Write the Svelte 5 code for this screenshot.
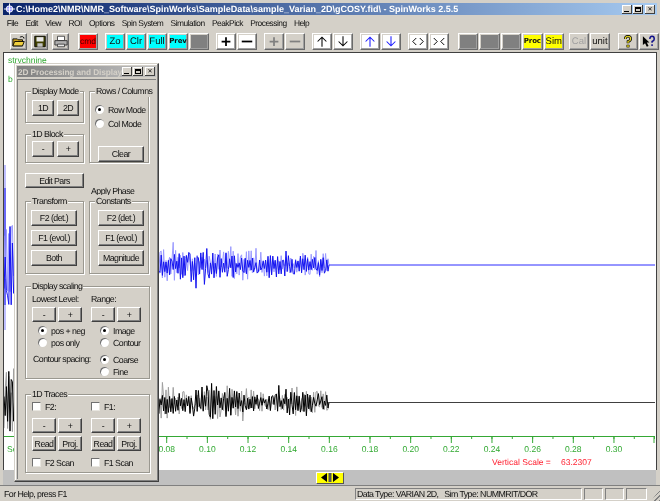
<script>
	const menus = ['File', 'Edit', 'View', 'ROI', 'Options', 'Spin System', 'Simulation', 'PeakPick', 'Processing', 'Help'];

	const toolbar = [
		[{ icon: 'open', w: 17 }, { icon: 'save', w: 17 }, { icon: 'print', w: 17 }],
		[{ t: 'cmd', c: 'red' }],
		[{ t: 'Zo', c: 'cyan' }, { t: 'Clr', c: 'cyan' }, { t: 'Full', c: 'cyan' }, { t: 'Prev', c: 'cyan small' }, { c: 'dim' }],
		[{ icon: 'plus', c: 'white' }, { icon: 'minus', c: 'white' }],
		[{ icon: 'plus', off: true }, { icon: 'minus', off: true }],
		[{ icon: 'up', c: 'white' }, { icon: 'down', c: 'white' }],
		[{ icon: 'up', c: 'white', blue: true }, { icon: 'down', c: 'white', blue: true }],
		[{ icon: 'apart', c: 'white' }, { icon: 'together', c: 'white' }],
		[{ c: 'dim' }, { c: 'dim' }, { c: 'dim' }, { t: 'Proc', c: 'yellow small' }, { t: 'Sim', c: 'yellow' }],
		[{ t: 'Cal', c: 'off' }, { t: 'unit' }],
		[{ icon: 'help' }, { icon: 'whatsthis' }]
	];

	// same little generator each run so the traces stay put
	function rng(seed) {
		let s = seed;
		return () => {
			s = (s * 1664525 + 1013904223) % 4294967296;
			return s / 4294967296;
		};
	}

	function trace(seed, base, left) {
		const r = rng(seed);
		const pts = [];
		let sign = 1;
		for (let x = 4; x <= 329; x += 1.2) {
			const slow = 0.8 + 0.2 * Math.sin(x / 13 + seed);
			let amp = x < 14 ? left : (20 - ((x - 150) / 180) * 8) * slow;
			if (r() > 0.9) amp *= 1.35;
			sign = r() > 0.15 ? -sign : sign;
			const y = base + sign * amp * (0.1 + 0.9 * r());
			pts.push(`${x.toFixed(1)},${y.toFixed(1)}`);
		}
		pts.push(`329,${base}`);
		return pts.join(' ');
	}

	const majors = [0.08, 0.1, 0.12, 0.14, 0.16, 0.18, 0.2, 0.22, 0.24, 0.26, 0.28, 0.3];
	const tickX = (v) => 166.7 + (v - 0.08) * 2033;
	const minors = Array.from({ length: 25 }, (_, i) => 0.01 * i + 0.08);
</script>

{#snippet icon(name, off, blue)}
	{@const ink = off ? '#808080' : blue ? '#1a1aff' : '#000'}
	<svg class="ico" width="14" height="13" viewBox="0 0 16 14">
		{#if name === 'open'}
			<path d="M1 4h5l1 1h5v7H1z" fill="#c8a020" stroke="#000" />
			<path d="M3 7h11l-2 5H1z" fill="#f0d040" stroke="#000" />
			<path d="M9 2q3-2 5 1l-1 0" fill="none" stroke="#000" />
		{:else if name === 'save'}
			<path d="M2 1h12v12H2z" fill="#404000" stroke="#000" />
			<path d="M4 2h8v5H4z" fill="#e8e8e8" />
			<path d="M5 9h6v4H5z" fill="#c0c0c0" />
		{:else if name === 'print'}
			<path d="M4 1h8v5H4z" fill="#fff" stroke="#404040" />
			<path d="M1 6h14v5H1z" fill="#b0b0b0" stroke="#303030" />
			<path d="M4 10h8v3H4z" fill="#e8e8e8" stroke="#404040" />
		{:else if name === 'plus'}
			<path d="M8 2v10M3 7h10" stroke={ink} stroke-width="2" />
		{:else if name === 'minus'}
			<path d="M2 7h12" stroke={ink} stroke-width="2" />
		{:else if name === 'up'}
			<path d="M8 13V2M3 7l5-5 5 5" fill="none" stroke={ink} stroke-width="1.2" />
		{:else if name === 'down'}
			<path d="M8 1v11M3 7l5 5 5-5" fill="none" stroke={ink} stroke-width="1.2" />
		{:else if name === 'apart'}
			<path d="M6 3L2 7l4 4M10 3l4 4-4 4" fill="none" stroke={ink} stroke-width="1.1" />
		{:else if name === 'together'}
			<path d="M2 3l4 4-4 4M14 3l-4 4 4 4" fill="none" stroke={ink} stroke-width="1.1" />
		{:else if name === 'help'}
			<path d="M5 4q0-3 3-3t3 3q0 2-3 3v2" fill="none" stroke="#000" stroke-width="3" />
			<path d="M5 4q0-3 3-3t3 3q0 2-3 3v2" fill="none" stroke="#e8d820" stroke-width="1.4" />
			<path d="M6.500 11h3v2.500h-3z" fill="#e8d820" stroke="#000" stroke-width="0.6" />
		{:else if name === 'whatsthis'}
			<path d="M1 1v10l2.500-2 2 4 2-1-2-4h3z" fill="#000" />
			<path d="M9 4q0-3 2.500-3T14 4q0 2-2.500 3v1.500M11.500 10v2" fill="none" stroke="#10108a" stroke-width="1.700" />
		{/if}
	</svg>
{/snippet}

{#snippet radio(label, on)}
	<span class="opt"><span class="radio" class:on></span>{label}</span>
{/snippet}

{#snippet check(label)}
	<span class="opt"><span class="box"></span>{label}</span>
{/snippet}

<div class="app">
	<header class="title">
		<svg width="13" height="12" viewBox="0 0 14 12">
			<circle cx="7" cy="6" r="3.500" fill="#9090ff" stroke="#fff" />
			<path d="M7 0v12M1 6h12" stroke="#fff" />
		</svg>
		<span class="caption">C:\Home2\NMR\NMR_Software\SpinWorks\SampleData\sample_Varian_2D\gCOSY.fid\ - SpinWorks 2.5.5</span>
		<div class="caps">
			<span class="cap"><i class="min"></i></span>
			<span class="cap"><i class="max"></i></span>
			<span class="cap x">✕</span>
		</div>
	</header>

	<nav class="menu">
		{#each menus as m}<span>{m}</span>{/each}
	</nav>

	<div class="tools">
		{#each toolbar as group}
			<div class="tgroup">
				{#each group as b}
					<span class="tbtn {b.c ?? ''}" style:width={b.w ? `${b.w}px` : null}>
						{#if b.icon}{@render icon(b.icon, b.off, b.blue)}{:else}{b.t ?? ''}{/if}
					</span>
				{/each}
			</div>
		{/each}
	</div>

	<main class="client">
		<svg class="plot" width="651" height="417" viewBox="4 53 651 417">
			<text x="8" y="63" class="green">strychnine</text>
			<text x="8" y="82" class="green">b</text>

			<path d="M5 165V330" stroke="#8080ff" />
			<path d="M5 188V305" stroke="#1414f0" />
			<polyline points={trace(77, 265, 50)} fill="none" stroke="#9a9aff" />
			<polyline points={trace(12345, 265, 40)} fill="none" stroke="#1414f0" />
			<path d="M329 265H655" stroke="#2c2cff" />

			<polyline points={trace(901, 402, 34)} fill="none" stroke="#a0a0a0" />
			<polyline points={trace(5150, 402, 34)} fill="none" stroke="#000" />
			<path d="M329 402.500H655" stroke="#404040" />

			<path d="M4 436.500H655" stroke="#35a835" />
			{#each minors as v}
				<path d="M{tickX(v)} 436v3" stroke="#35a835" />
			{/each}
			<path d="M654 436v7" stroke="#35a835" />
			{#each majors as v}
				<path d="M{tickX(v)} 436v7" stroke="#35a835" />
				<text x={tickX(v)} y="452" text-anchor="middle" class="green">{v.toFixed(2)}</text>
			{/each}
			<text x="7" y="452" class="green">Sec</text>

			<text x="492" y="465" class="red">Vertical Scale =</text>
			<text x="561" y="465" class="red">63.2307</text>
		</svg>
	</main>

	<div class="hscroll">
		<span class="thumb">
			<svg width="20" height="9" viewBox="0 0 20 9">
				<path d="M7 0v9L1 4.500zM13 0v9l6-4.500z" fill="#000" />
				<path d="M8.500 0h3v9h-3z" fill="#555" />
			</svg>
		</span>
	</div>

	<footer class="status">
		<span class="help">For Help, press F1</span>
		<span class="pane type">Data Type: VARIAN 2D,&nbsp;&nbsp; Sim Type: NUMMRIT/DOR</span>
		<span class="pane s1"></span>
		<span class="pane s2"></span>
		<span class="pane s3"></span>
		<span class="grip"></span>
	</footer>

	<section class="panel">
		<header class="ptitle">
			<span>2D Processing and Display</span>
			<div class="caps">
				<span class="cap"><i class="min"></i></span>
				<span class="cap"><i class="max"></i></span>
				<span class="cap x">✕</span>
			</div>
		</header>
		<div class="pbody">
			<div class="cols top">
				<div class="stack">
					<div class="group mode">
						<span class="legend">Display Mode</span>
						<div class="row"><button>1D</button><button>2D</button></div>
					</div>
					<div class="group block">
						<span class="legend">1D Block</span>
						<div class="row"><button>-</button><button>+</button></div>
					</div>
				</div>
				<div class="group rows">
					<span class="legend">Rows / Columns</span>
					{@render radio('Row Mode', true)}
					{@render radio('Col Mode', false)}
					<button class="wide clear">Clear</button>
				</div>
			</div>

			<div class="cols mid">
				<button class="edit">Edit Pars</button>
				<span class="apply">Apply Phase</span>
			</div>

			<div class="cols trans">
				<div class="group tall left">
					<span class="legend">Transform</span>
					<button class="wide">F2 (det.)</button>
					<button class="wide">F1 (evol.)</button>
					<button class="wide">Both</button>
				</div>
				<div class="group tall">
					<span class="legend">Constants</span>
					<button class="wide">F2 (det.)</button>
					<button class="wide">F1 (evol.)</button>
					<button class="wide">Magnitude</button>
				</div>
			</div>

			<div class="group scaling">
				<span class="legend">Display scaling</span>
				<div class="grid">
					<div class="col">
						<span class="lbl">Lowest Level:</span>
						<div class="row pm"><button>-</button><button>+</button></div>
						<div class="opts">
							{@render radio('pos + neg', true)}
							{@render radio('pos only', false)}
						</div>
						<span class="lbl spacing">Contour spacing:</span>
					</div>
					<div class="col">
						<span class="lbl">Range:</span>
						<div class="row pm"><button>-</button><button>+</button></div>
						<div class="opts">
							{@render radio('Image', true)}
							{@render radio('Contour', false)}
						</div>
						<div class="opts second">
							{@render radio('Coarse', true)}
							{@render radio('Fine', false)}
						</div>
					</div>
				</div>
			</div>

			<div class="group traces">
				<span class="legend">1D Traces</span>
				<div class="grid">
					<div class="col">
						{@render check('F2:')}
						<div class="row pm t1"><button>-</button><button>+</button></div>
						<div class="row pm t2"><button>Read</button><button>Proj.</button></div>
						<div class="t3">{@render check('F2 Scan')}</div>
					</div>
					<div class="col">
						{@render check('F1:')}
						<div class="row pm t1"><button>-</button><button>+</button></div>
						<div class="row pm t2"><button>Read</button><button>Proj.</button></div>
						<div class="t3">{@render check('F1 Scan')}</div>
					</div>
				</div>
			</div>
		</div>
	</section>
</div>

<style>
	:global(body) {
		margin: 0;
	}

	.app {
		position: relative;
		box-sizing: border-box;
		width: 660px;
		height: 501px;
		padding: 3px 3px 0;
		display: flex;
		flex-direction: column;
		overflow: hidden;
		background: #d4d0c8;
		font-family: 'Liberation Sans', Arial, sans-serif;
		font-size: 8.8px;
		letter-spacing: -0.55px;
		color: #111;
		text-rendering: geometricPrecision;
		filter: blur(0.3px);
	}

	.title {
		height: 12px;
		flex: none;
		display: flex;
		align-items: center;
		background: linear-gradient(90deg, #0a246a, #a6caf0);
		color: #fff;
		font: bold 9px 'Liberation Sans', Arial, sans-serif;
		letter-spacing: 0;
		white-space: nowrap;
	}

	.caption {
		flex: 1;
		min-width: 0;
		overflow: hidden;
	}

	.caps {
		display: flex;
		gap: 1px;
		padding-right: 2px;
	}

	.cap {
		box-sizing: border-box;
		width: 10px;
		height: 9px;
		display: block;
		position: relative;
		background: #d4d0c8;
		box-shadow: inset -1px -1px 0 #404040, inset 1px 1px 0 #fff;
		color: #000;
		font: bold 6px/9px 'DejaVu Sans', sans-serif;
		text-align: center;
	}

	.cap.x {
		margin-left: 1px;
	}

	.cap i {
		position: absolute;
		display: block;
	}

	.cap .min {
		left: 2px;
		bottom: 2px;
		width: 5px;
		height: 1px;
		background: #000;
	}

	.cap .max {
		left: 2px;
		top: 2px;
		width: 6px;
		height: 5px;
		border: 1px solid #000;
		border-top-width: 2px;
		box-sizing: border-box;
	}

	.menu {
		height: 15px;
		flex: none;
		display: flex;
		align-items: center;
		font-size: 8.4px;
		letter-spacing: -0.5px;
	}

	.menu span {
		padding: 0 3.65px;
		white-space: nowrap;
	}

	.tools {
		height: 22px;
		flex: none;
		display: flex;
		align-items: center;
		gap: 7px;
		padding-left: 7px;
	}

	.tgroup {
		display: flex;
		gap: 1px;
	}

	.tgroup:nth-child(1) {
		gap: 4px;
		margin-right: 2px;
	}

	.tgroup:nth-child(9) {
		margin-left: 2px;
	}

	.tgroup:nth-child(9) .tbtn {
		width: 20.4px;
	}

	.tgroup:nth-child(10) {
		margin-left: -2px;
	}

	.tgroup:nth-child(11) {
		margin-left: 1px;
	}

	.tbtn {
		box-sizing: border-box;
		width: 20px;
		height: 17px;
		display: flex;
		align-items: center;
		justify-content: center;
		background: #d4d0c8;
		border: 1px solid;
		border-color: #fff #6a6a6a #6a6a6a #fff;
		box-shadow: inset -1px -1px 0 #a0a0a0, inset 1px 1px 0 #d4d0c8;
		font-size: 9.5px;
		letter-spacing: 0;
		white-space: nowrap;
		overflow: hidden;
	}

	.ico {
		flex: none;
	}

	.red { background: #ff0000; color: #400; font-size: 8.5px; }
	.cyan { background: #00ffff; }
	.yellow { background: #ffff00; }
	.white { background: #fff; }
	.dim { background: #808080; }
	.off { color: #a0a0a0; }
	.small { font-size: 7px; font-weight: bold; letter-spacing: -0.1px; font-family: 'DejaVu Sans', sans-serif; }

	.client {
		flex: 1;
		min-height: 0;
		background: #fff;
		border: 1px solid #404040;
		border-bottom: 0;
	}

	.plot {
		display: block;
	}

	.plot text {
		font-family: 'Liberation Sans', Arial, sans-serif;
		font-size: 8.5px;
		letter-spacing: 0;
	}

	.plot .green { fill: #2fa82f; }
	.plot .red { fill: #ff2030; background: none; }

	.hscroll {
		height: 15px;
		flex: none;
		margin-right: 1px;
		display: flex;
		justify-content: center;
		align-items: center;
		background: #c0c0c0;
	}

	.thumb {
		box-sizing: border-box;
		width: 28px;
		height: 12px;
		display: flex;
		align-items: center;
		justify-content: center;
		background: #ffff00;
		border: 1px solid;
		border-color: #fff #555 #555 #fff;
	}

	.status {
		height: 15px;
		flex: none;
		display: flex;
		align-items: center;
		gap: 2px;
		margin: 0 -3px;
		padding-left: 4px;
		border-top: 1px solid #808080;
	}

	.help {
		width: 349px;
	}

	.pane {
		box-sizing: border-box;
		height: 12px;
		line-height: 10px;
		padding-left: 1px;
		border: 1px solid;
		border-color: #808080 #fff #fff #808080;
		white-space: nowrap;
		overflow: hidden;
	}

	.type { width: 227px; }
	.s1 { width: 19px; }
	.s2 { width: 19px; }
	.s3 { width: 21px; }

	.grip {
		flex: 1;
		align-self: stretch;
		background: repeating-linear-gradient(135deg, #d4d0c8 0 2px, #808080 2px 3px);
		clip-path: polygon(100% 20%, 100% 100%, 20% 100%);
	}

	/* floating tool window */
	.panel {
		position: absolute;
		left: 14px;
		top: 63px;
		box-sizing: border-box;
		width: 145px;
		height: 419px;
		display: flex;
		flex-direction: column;
		background: #d4d0c8;
		border: 1px solid;
		border-color: #d4d0c8 #404040 #404040 #d4d0c8;
		box-shadow: inset -1px -1px 0 #808080, inset 1px 1px 0 #fff;
		padding: 2px;
	}

	.ptitle {
		height: 11px;
		flex: none;
		display: flex;
		align-items: center;
		justify-content: space-between;
		background: linear-gradient(90deg, #808080, #c0c0c0);
		color: #d4d0c8;
		font: bold 8.3px 'Liberation Sans', Arial, sans-serif;
		letter-spacing: -0.1px;
		white-space: nowrap;
		overflow: hidden;
	}

	.ptitle > span {
		padding-left: 1px;
	}

	.ptitle .caps {
		padding-right: 0;
		background: #d4d0c8;
		margin-right: 1px;
	}

	.pbody {
		flex: 1;
		margin-top: 2px;
		padding: 11px 0 0 7px;
		border: 1px solid;
		border-color: #808080 #fff #fff #808080;
		border-bottom: 0;
		border-right: 0;
	}

	.cols {
		display: flex;
		gap: 5px;
	}

	.stack {
		width: 59px;
		display: flex;
		flex-direction: column;
		gap: 11px;
	}

	.group {
		position: relative;
		box-sizing: border-box;
		border: 1px solid #9a9890;
		box-shadow: 1px 1px 0 #fff, inset 1px 1px 0 #fff;
	}

	.legend {
		position: absolute;
		top: -7px;
		left: 5px;
		padding: 0 1px;
		background: #d4d0c8;
		white-space: nowrap;
		line-height: 12px;
	}

	button {
		box-sizing: border-box;
		height: 16px;
		margin: 0;
		padding: 0;
		background: #d4d0c8;
		border: 1px solid;
		border-color: #fff #404040 #404040 #fff;
		box-shadow: inset -1px -1px 0 #808080;
		font: inherit;
		letter-spacing: inherit;
		color: inherit;
	}

	.row {
		display: flex;
		gap: 3px;
	}

	.row button {
		width: 22px;
	}

	.mode { height: 32px; padding: 8px 0 0 6px; }
	.block { height: 29px; padding: 6px 0 0 6px; }

	.rows {
		width: 60px;
		height: 72px;
		padding: 12px 0 0 5px;
		display: flex;
		flex-direction: column;
		gap: 3px;
	}

	.opt {
		display: flex;
		align-items: center;
		gap: 4px;
		height: 11px;
		white-space: nowrap;
	}

	.radio {
		position: relative;
		width: 9px;
		height: 9px;
		flex: none;
		border-radius: 50%;
		background: #fff;
		box-shadow: inset 1px 1px 0 #707070;
	}

	.radio.on::after {
		content: '';
		position: absolute;
		left: 3px;
		top: 3px;
		width: 3px;
		height: 3px;
		border-radius: 50%;
		background: #000;
	}

	.box {
		box-sizing: border-box;
		width: 9px;
		height: 9px;
		flex: none;
		background: #fff;
		border: 1px solid #e8e6e0;
		border-top-color: #707070;
		border-left-color: #707070;
	}

	.wide {
		display: block;
		width: 46px;
	}

	.clear {
		margin: 14px 0 0 3px;
	}

	.mid {
		height: 28px;
		margin-top: 10px;
	}

	.edit {
		width: 59px;
		height: 15px;
	}

	.apply {
		margin: 12px 0 0 2px;
		line-height: 12px;
		white-space: nowrap;
	}

	.tall {
		width: 60px;
		height: 73px;
		padding: 8px 0 0 8px;
		display: flex;
		flex-direction: column;
		gap: 4px;
	}

	.tall.left {
		width: 59px;
		padding-left: 5px;
	}

	.scaling {
		width: 125px;
		height: 93px;
		margin-top: 12px;
	}

	.traces {
		width: 125px;
		height: 79px;
		margin-top: 15px;
	}

	.grid {
		display: grid;
		grid-template-columns: 59px 59px;
		padding: 6px 0 0 6px;
	}

	.scaling .col {
		display: flex;
		flex-direction: column;
	}

	.lbl {
		height: 12px;
		line-height: 12px;
		white-space: nowrap;
	}

	.pm {
		gap: 2px;
	}

	.pm button {
		width: 24px;
		height: 15px;
	}

	.scaling .pm {
		margin-top: 2px;
	}

	.opts {
		margin: 3px 0 0 6px;
		display: flex;
		flex-direction: column;
		gap: 1px;
	}

	.col:last-child .opts {
		margin-left: 9px;
	}

	.spacing {
		margin-top: 5px;
		margin-left: 1px;
	}

	.second {
		margin-top: 6px;
	}

	.t1 {
		margin-top: 6px;
	}

	.t2 {
		margin-top: 3px;
	}

	.t3 {
		margin-top: 6px;
	}
</style>
